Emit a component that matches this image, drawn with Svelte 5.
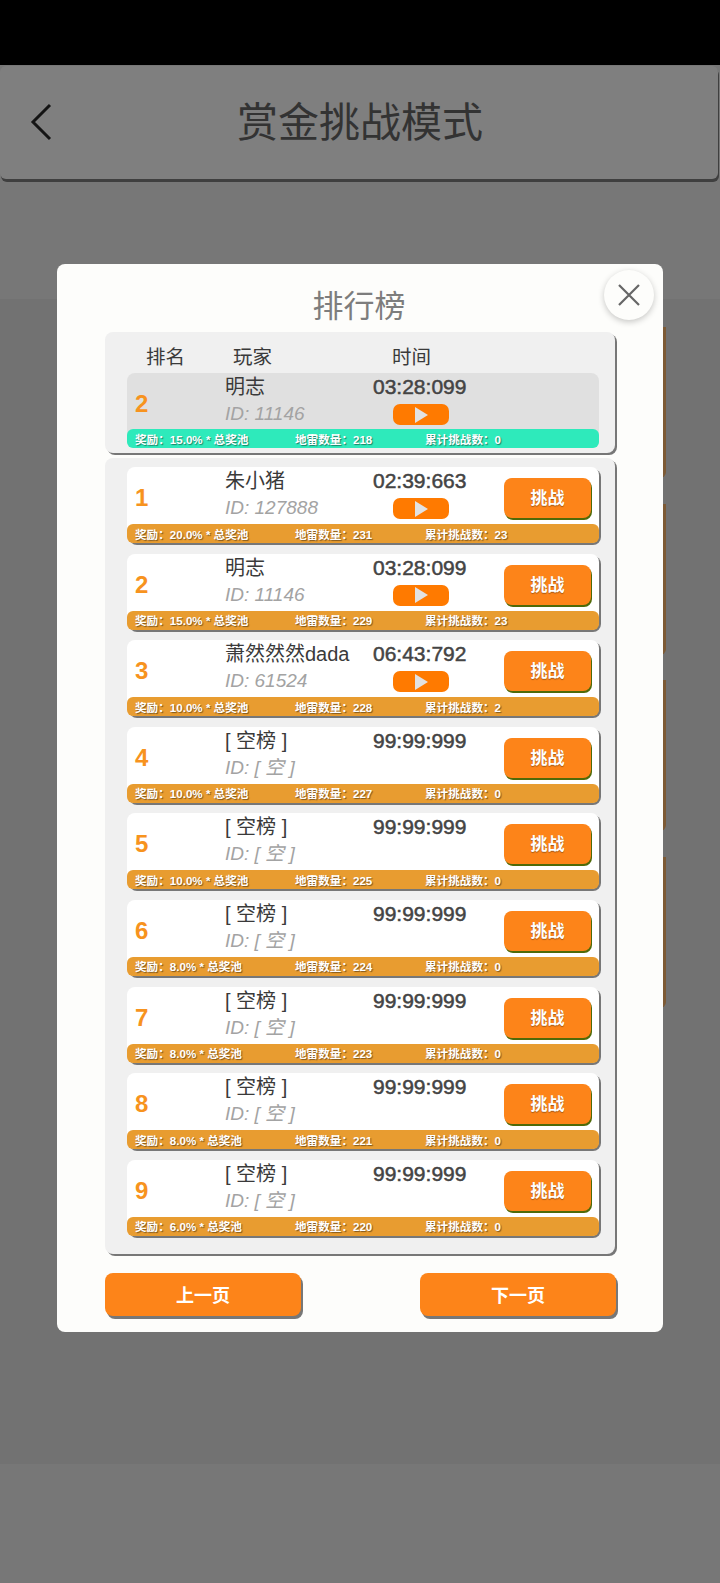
<script lang="ts">
	const mine = {
		rank: 2,
		name: '明志',
		id: '11146',
		time: '03:28:099',
		pct: '15.0',
		mines: 218,
		tries: 0,
		replay: true
	};

	const rows = [
		{ rank: 1, name: '朱小猪', id: '127888', time: '02:39:663', pct: '20.0', mines: 231, tries: 23, replay: true },
		{ rank: 2, name: '明志', id: '11146', time: '03:28:099', pct: '15.0', mines: 229, tries: 23, replay: true },
		{ rank: 3, name: '萧然然然dada', id: '61524', time: '06:43:792', pct: '10.0', mines: 228, tries: 2, replay: true },
		{ rank: 4, name: '[ 空榜 ]', id: '[ 空 ]', time: '99:99:999', pct: '10.0', mines: 227, tries: 0, replay: false },
		{ rank: 5, name: '[ 空榜 ]', id: '[ 空 ]', time: '99:99:999', pct: '10.0', mines: 225, tries: 0, replay: false },
		{ rank: 6, name: '[ 空榜 ]', id: '[ 空 ]', time: '99:99:999', pct: '8.0', mines: 224, tries: 0, replay: false },
		{ rank: 7, name: '[ 空榜 ]', id: '[ 空 ]', time: '99:99:999', pct: '8.0', mines: 223, tries: 0, replay: false },
		{ rank: 8, name: '[ 空榜 ]', id: '[ 空 ]', time: '99:99:999', pct: '8.0', mines: 221, tries: 0, replay: false },
		{ rank: 9, name: '[ 空榜 ]', id: '[ 空 ]', time: '99:99:999', pct: '6.0', mines: 220, tries: 0, replay: false }
	];
</script>

{#snippet row(r, highlight)}
	<div class="row" class:highlight>
		<div class="main">
			<div class="rank">{r.rank}</div>
			<div class="player">
				<div class="name">{r.name}</div>
				<div class="id">ID: {r.id}</div>
			</div>
			<div class="time">
				<div class="clock">{r.time}</div>
				{#if r.replay}
					<button class="play" aria-label="回放"><span class="tri"></span></button>
				{/if}
			</div>
			{#if !highlight}
				<button class="challenge">挑战</button>
			{/if}
		</div>
		<div class="bar">
			<span class="reward">奖励：{r.pct}% * 总奖池</span>
			<span class="mines">地雷数量：{r.mines}</span>
			<span>累计挑战数：{r.tries}</span>
		</div>
	</div>
{/snippet}

<div class="page">
	<div class="status"></div>
	<header class="top">
		<svg class="back" width="24" height="40" viewBox="0 0 24 40">
			<path d="M21 3 L4 20 L21 37" fill="none" stroke="#141414" stroke-width="3" />
		</svg>
		<h1>赏金挑战模式</h1>
	</header>

	<div class="content">
		<div class="card"></div>
		<div class="card"></div>
		<div class="card"></div>
		<div class="card"></div>
	</div>

	<div class="modal">
		<h2>排行榜</h2>
		<button class="close" aria-label="关闭">
			<svg width="24" height="24" viewBox="0 0 24 24">
				<path d="M2 2 L22 22 M22 2 L2 22" stroke="#666" stroke-width="2.2" fill="none" />
			</svg>
		</button>

		<section class="panel mine">
			<div class="heads">
				<span class="h-rank">排名</span>
				<span class="h-player">玩家</span>
				<span>时间</span>
			</div>
			{@render row(mine, true)}
		</section>

		<section class="panel list">
			{#each rows as r}
				{@render row(r, false)}
			{/each}
		</section>

		<div class="pager">
			<button>上一页</button>
			<button>下一页</button>
		</div>
	</div>
</div>

<style>
	:global(body) {
		margin: 0;
		background: #777;
	}
	.page {
		position: relative;
		width: 720px;
		height: 1583px;
		overflow: hidden;
		background: #777;
		font-family: 'Liberation Sans', 'Noto Sans CJK SC', sans-serif;
	}
	button {
		font-family: inherit;
		border: none;
		padding: 0;
		cursor: pointer;
	}
	.status {
		height: 65px;
		background: #000;
	}
	.top {
		height: 113px;
		margin: 1px 2px 0 0;
		display: flex;
		align-items: center;
		justify-content: center;
		position: relative;
		background: #7f7f7f;
		border-radius: 6px;
		box-shadow: 1px 3px 0 #3f3f3f;
	}
	.back {
		position: absolute;
		left: 29px;
		top: 36px;
	}
	h1 {
		margin: 0 0 7px 2px;
		font-size: 41px;
		font-weight: 400;
		color: #333;
	}
	.content {
		position: absolute;
		left: 0;
		right: 0;
		top: 299px;
		height: 1165px;
		box-sizing: border-box;
		padding: 28px 54px 0 0;
		display: flex;
		flex-direction: column;
		gap: 25.7px;
		background: #727272;
	}
	.card {
		height: 151px;
		border-right: 3px solid #7d5a35;
		border-radius: 0 0 6px 0;
	}
	.modal {
		position: absolute;
		left: 57px;
		top: 264px;
		width: 606px;
		height: 1068px;
		box-sizing: border-box;
		padding: 0 46px 0 48px;
		background: #fdfdfb;
		border-radius: 8px;
	}
	h2 {
		margin: 0;
		height: 68px;
		box-sizing: border-box;
		padding: 20px 4px 0 0;
		text-align: center;
		font-size: 31px;
		line-height: 46px;
		font-weight: 400;
		color: #7d7d7d;
	}
	.close {
		position: absolute;
		right: 9px;
		top: 6px;
		width: 50px;
		height: 50px;
		display: flex;
		align-items: center;
		justify-content: center;
		border-radius: 50%;
		background: #fdfdfb;
		box-shadow: 0 2px 6px rgba(0, 0, 0, 0.22);
	}
	.panel {
		width: 510px;
		box-sizing: border-box;
		padding-left: 22px;
		background: #f0f0f0;
		border-radius: 8px;
		box-shadow: 2px 2px 0 #777;
	}
	.mine {
		height: 121px;
		margin-bottom: 5px;
	}
	.heads {
		height: 41px;
		box-sizing: border-box;
		padding: 11px 0 0 19px;
		display: flex;
		font-size: 19.5px;
		line-height: 28px;
		color: #3a3a3a;
	}
	.h-rank {
		width: 87px;
	}
	.h-player {
		width: 159px;
	}
	.list {
		height: 796px;
		padding-top: 9px;
		display: flex;
		flex-direction: column;
		gap: 10.6px;
	}
	.row {
		width: 472px;
		height: 76px;
		flex: none;
		display: flex;
		flex-direction: column;
		background: #fff;
		border-radius: 8px;
		box-shadow: 2px 2px 0 #777;
	}
	.row.highlight {
		height: 75px;
		background: #e0e0e0;
		box-shadow: none;
	}
	.main {
		flex: 1;
		display: flex;
		position: relative;
	}
	.rank {
		width: 98px;
		box-sizing: border-box;
		padding: 17px 0 0 8px;
		font-size: 24px;
		line-height: 28px;
		font-weight: 700;
		color: #f7931e;
	}
	.player {
		width: 147px;
	}
	.name {
		font-size: 20px;
		line-height: 28px;
		color: #3a3a3a;
		white-space: nowrap;
	}
	.id {
		font-size: 19px;
		line-height: 26px;
		font-style: italic;
		color: #a3a3a3;
		white-space: nowrap;
	}
	.time {
		width: 132px;
		display: flex;
		flex-direction: column;
	}
	.clock {
		padding-left: 1px;
		font-size: 21px;
		line-height: 28px;
		color: #444;
		-webkit-text-stroke: 0.5px #444;
	}
	.play {
		width: 56px;
		height: 21px;
		margin: 3px 0 0 21px;
		display: flex;
		align-items: center;
		justify-content: center;
		background: #ff7a00;
		border-radius: 7px;
	}
	.tri {
		width: 0;
		height: 0;
		border-left: 13px solid #e2e2e2;
		border-top: 8px solid transparent;
		border-bottom: 8px solid transparent;
	}
	.challenge {
		width: 87px;
		height: 40px;
		margin-top: 11px;
		padding-bottom: 3px;
		background: #fd8419;
		border-radius: 8px;
		box-shadow: 1px 2px 0 #4f6a08;
		font-size: 17px;
		font-weight: 700;
		color: #fff;
		text-shadow: 0 1px 1px rgba(0, 0, 0, 0.35);
	}
	.bar {
		height: 19px;
		flex: none;
		display: flex;
		align-items: center;
		box-sizing: border-box;
		padding-left: 8px;
		background: #e89c30;
		border-radius: 6px;
		font-size: 11.6px;
		font-weight: 700;
		color: #fff;
		text-shadow: 1px 1px 1px rgba(0, 0, 0, 0.45);
		white-space: nowrap;
	}
	.highlight .bar {
		background: #2eeabb;
	}
	.reward {
		width: 160px;
	}
	.mines {
		width: 130px;
	}
	.pager {
		width: 511px;
		margin-top: 19px;
		display: flex;
		justify-content: space-between;
	}
	.pager button {
		width: 196px;
		height: 43px;
		padding-bottom: 2px;
		background: #fd8419;
		border-radius: 8px;
		box-shadow: 2px 3px 0 #777;
		font-size: 18px;
		font-weight: 700;
		color: #fff;
	}
</style>
